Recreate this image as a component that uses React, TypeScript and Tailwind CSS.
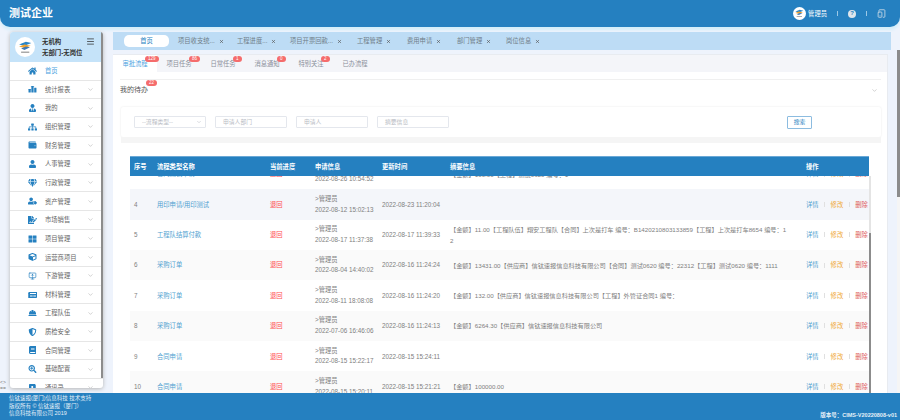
import { ChevronDown, Menu, MonitorUp, TabletSmartphone, X } from "lucide-react"
import {
  FaAddressBook,
  FaBook,
  FaCube,
  FaFileSignature,
  FaGem,
  FaHardHat,
  FaHome,
  FaNewspaper,
  FaSearchPlus,
  FaShieldAlt,
  FaSitemap,
  FaThLarge,
  FaUser,
  FaUserTag,
  FaUserTie,
  FaWallet,
} from "react-icons/fa"

function BarsIcon({ className }: { className?: string }) {
  return (
    <svg viewBox="0 0 16 16" className={className} fill="currentColor">
      <rect x="0" y="8" width="4.5" height="7" rx="0.5" />
      <rect x="5.7" y="2" width="4.5" height="13" rx="0.5" />
      <rect x="11.4" y="5.5" width="4.5" height="9.5" rx="0.5" />
    </svg>
  )
}

const menu = [
  { name: "首页", icon: FaHome, active: true },
  { name: "统计报表", icon: BarsIcon },
  { name: "我的", icon: FaUserTie },
  { name: "组织管理", icon: FaSitemap },
  { name: "财务管理", icon: FaWallet },
  { name: "人事管理", icon: FaUser },
  { name: "行政管理", icon: FaGem },
  { name: "资产管理", icon: FaUserTag },
  { name: "市场销售", icon: FaFileSignature },
  { name: "项目管理", icon: FaThLarge },
  { name: "运营商项目", icon: FaCube },
  { name: "下游管理", icon: MonitorUp },
  { name: "材料管理", icon: FaNewspaper },
  { name: "工程队伍", icon: FaHardHat },
  { name: "质检安全", icon: FaShieldAlt },
  { name: "合同管理", icon: FaBook },
  { name: "基础配置", icon: FaSearchPlus },
  { name: "通讯录", icon: FaAddressBook },
]

const openTabs = [
  { name: "项目收支统...", width: "w-[59px]" },
  { name: "工程进度...", width: "w-[53px]" },
  { name: "项目开票回款...", width: "w-[67px]" },
  { name: "工程管理", width: "w-[50px]" },
  { name: "费用申请", width: "w-[50px]" },
  { name: "部门管理", width: "w-[49px]" },
  { name: "岗位信息", width: "w-[50px]" },
]

const subTabs = [
  { name: "审批流程", badge: "129", active: true },
  { name: "项目任务", badge: "86" },
  { name: "日常任务", badge: "1" },
  { name: "消息通知", badge: "0" },
  { name: "特别关注", badge: "2" },
  { name: "已办流程" },
]

const rows = [
  { no: "3", type: "合同测试申请", apply: "2022-08-26 10:54:52", update: "", info: "【金额】100.00【工程】测试0620 编号：1", bg: "bg-white" },
  { no: "4", type: "用印申请/用印测试", apply: "2022-08-12 15:02:13", update: "2022-08-23 11:20:04", info: "", bg: "bg-[#f4f6fa]" },
  {
    no: "5",
    type: "工程队结算付款",
    apply: "2022-08-17 11:37:38",
    update: "2022-08-17 11:39:33",
    info: "【金额】11.00【工程队伍】翔安工程队【合同】上次是打车 编号：B1420210803133859【工程】上次是打车8654 编号：12",
    bg: "bg-white",
  },
  {
    no: "6",
    type: "采购订单",
    apply: "2022-08-04 14:40:02",
    update: "2022-08-16 11:24:24",
    info: "【金额】13431.00【供应商】信钛速报信息科技有限公司【合同】测试0620 编号：22312【工程】测试0620 编号：1111",
    bg: "bg-[#fafafa]",
  },
  {
    no: "7",
    type: "采购订单",
    apply: "2022-08-11 18:08:08",
    update: "2022-08-16 11:24:20",
    info: "【金额】132.00【供应商】信钛速报信息科技有限公司【工程】外管证合同1 编号：",
    bg: "bg-white",
  },
  { no: "8", type: "采购订单", apply: "2022-07-06 16:46:06", update: "2022-08-16 11:24:13", info: "【金额】6264.30【供应商】信钛速报信息科技有限公司", bg: "bg-[#fafafa]" },
  { no: "9", type: "合同申请", apply: "2022-08-15 15:22:17", update: "2022-08-15 15:24:11", info: "", bg: "bg-white" },
  { no: "10", type: "合同申请", apply: "2022-08-15 15:20:11", update: "2022-08-15 15:21:21", info: "【金额】100000.00", bg: "bg-[#fafafa]" },
]

function Logo({ size }: { size: string }) {
  return (
    <div className={`${size} flex shrink-0 items-center justify-center rounded-full bg-white`}>
      <svg viewBox="0 0 24 24" className="h-[82%] w-[82%]">
        <path d="M3 8 L13 4 L21 6 L11 10 Z" fill="#2a86c8" />
        <path d="M3 11 L11 8 L20 10 L11 13 Z" fill="#f0a22e" />
        <path d="M6 14 L13 11 L19 12 L11 16 Z" fill="#3f79b5" />
        <rect x="6" y="18.5" width="12" height="1.6" fill="#8a8a8a" />
      </svg>
    </div>
  )
}

function Badge({ text, className }: { text: string; className: string }) {
  return (
    <span className={`absolute flex h-[6px] items-center justify-center rounded-full bg-[#f56c6c] px-[3px] text-[4.5px] leading-none text-white ${className}`}>
      {text}
    </span>
  )
}

export default function App() {
  return (
    <div className="relative flex h-[420px] w-[900px] flex-col overflow-hidden bg-[#eef3fc] font-['Liberation_Sans','Noto_Sans_CJK_SC',sans-serif] text-[#606266]">
      <header className="flex h-[27px] shrink-0 items-center justify-between rounded-b-[10px] bg-[#2580c0] pl-[9px] pr-[14px] shadow-[0_3px_3px_#d3eefa]">
        <span className="text-[11px] font-bold text-white">测试企业</span>
        <div className="flex items-center text-white">
          <Logo size="h-[13px] w-[13px]" />
          <span className="ml-[2px] text-[6.3px]">管理员</span>
          <span className="ml-[10px] h-[5px] w-px bg-[#9cc8e6]" />
          <span className="ml-[10px] flex h-[8px] w-[8px] items-center justify-center rounded-full bg-[#dfe6ec] text-[6px] font-bold text-[#2580c0]">?</span>
          <span className="ml-[10px] h-[5px] w-px bg-[#9cc8e6]" />
          <TabletSmartphone className="ml-[10px] h-[9px] w-[9px] text-[#dfe6ec]" />
        </div>
      </header>

      <div className="flex min-h-0 flex-1 pt-[5px]">
        <aside className="relative ml-[10px] flex h-[356px] w-[93px] shrink-0 flex-col overflow-hidden rounded-[3px] bg-white shadow-[0_1px_4px_#b5b5b5]">
          <div className="flex h-[30px] shrink-0 items-center bg-[#c5e3f9] pl-[5px] pr-[8px]">
            <Logo size="h-[20px] w-[20px]" />
            <div className="ml-[7px] flex-1 text-[6.4px] leading-[11px] text-[#333]">
              <div className="flex items-center justify-between font-bold">
                无机构
                <Menu className="h-[9px] w-[9px]" />
              </div>
              <div className="font-bold">无部门-无岗位</div>
            </div>
          </div>
          <div className="min-h-0 flex-1 overflow-hidden">
            {menu.map((item) => (
              <div key={item.name} className="flex h-[18.65px] items-center border-b border-[#e6e6e6] pl-[18px] pr-[9px]">
                <item.icon className="h-[8px] w-[9px] shrink-0 text-[#2580c0]" />
                <span className={`ml-[8px] flex-1 text-[6.3px] ${item.active ? "text-[#4a9fe0]" : "text-[#666]"}`}>{item.name}</span>
                {!item.active && <ChevronDown className="h-[7px] w-[7px] text-[#b5b5b5]" />}
              </div>
            ))}
          </div>
          <div className="absolute right-0 top-0 h-[346px] w-[2px] bg-[#8c8c8c]" />
        </aside>

        <main className="ml-[10px] flex min-w-0 flex-1 flex-col">
          <div className="flex h-[18px] w-[778px] shrink-0 items-center bg-[#bddcf5] pl-[11px]">
            <div className="flex h-[12px] w-[45px] items-center justify-center rounded-[5px] bg-white text-[6.3px] text-[#2580c0]">首页</div>
            <div className="ml-[9px] flex items-center text-[6.3px] text-[#6f7c88]">
              {openTabs.map((t) => (
                <span key={t.name} className={`flex items-center gap-[4px] whitespace-nowrap ${t.width}`}>
                  {t.name}
                  <X className="h-[5px] w-[5px] text-[#555]" strokeWidth={3} />
                </span>
              ))}
            </div>
          </div>

          <div className="flex min-h-0 flex-1">
            <section className="mt-[4px] flex w-[775px] min-w-0 flex-col border-r border-[#e8ebf0] bg-white">
              <div className="flex h-[18px] shrink-0 border-t border-[#e8ebf0] bg-[#f4f5f9]">
                {subTabs.map((t) => (
                  <div
                    key={t.name}
                    className={`relative flex h-[18px] w-[44px] items-center justify-center text-[6.3px] ${t.active ? "bg-white text-[#4a9fe0]" : "text-[#8a8f99]"}`}
                  >
                    {t.name}
                    {t.badge && <Badge text={t.badge} className="left-[32px] top-[1px]" />}
                  </div>
                ))}
              </div>

              <div className="ml-[7px] mr-[6px] mt-[7px] flex h-[27px] shrink-0 items-center justify-between border-t border-[#f0f0f0] pb-[5px]">
                <span className="relative text-[7px] text-[#555]">
                  我的待办
                  <Badge text="22" className="left-[26px] top-[-5px]" />
                </span>
                <ChevronDown className="mr-[3px] h-[7px] w-[7px] text-[#b5b5b5]" />
              </div>

              <div className="ml-[8px] mr-[6px] mt-[1px] flex h-[30px] shrink-0 items-center rounded-[2px] pl-[13px] pr-[69px] shadow-[0_0_2px_#e4e4e4]">
                <div className="flex h-[12px] w-[72px] items-center justify-between rounded-[1px] border border-[#e4e7ed] pl-[7px] pr-[3px] text-[5.8px] text-[#b9bcc4]">
                  --流程类型--
                  <ChevronDown className="h-[6px] w-[6px]" />
                </div>
                {["申请人部门", "申请人", "摘要信息"].map((p) => (
                  <div key={p} className="ml-[9px] flex h-[12px] w-[72px] items-center rounded-[1px] border border-[#e4e7ed] pl-[7px] text-[5.8px] text-[#b9bcc4]">
                    {p}
                  </div>
                ))}
                <div className="ml-auto flex h-[13px] w-[25px] items-center justify-center rounded-[1px] border border-[#8cbce0] text-[5.8px] text-[#2580c0]">搜索</div>
              </div>

              <div className="ml-[8px] mr-[6px] h-[6px] shrink-0 bg-[#f5f5f5]" />

              <div className="flex min-h-0 flex-1 flex-col pb-0 pl-[17px] pr-[18px] pt-[13px]">
                <div className="relative flex min-h-0 flex-1 flex-col">
                  <div className="z-10 flex h-[20px] shrink-0 items-center border-t border-[#6aa8d6] bg-[#2580c0] text-[6.3px] font-bold text-white">
                    <span className="w-[27px] pl-[4px]">序号</span>
                    <span className="w-[113px]">流程类型名称</span>
                    <span className="w-[45px]">当前进度</span>
                    <span className="w-[67px]">申请信息</span>
                    <span className="w-[68px]">更新时间</span>
                    <span className="w-[356px]">摘要信息</span>
                    <span>操作</span>
                  </div>
                  <div className="min-h-0 flex-1 overflow-hidden">
                    <div className="mt-[-17px]">
                      {rows.map((r) => (
                        <div key={r.no} className={`flex h-[30.35px] items-center text-[6.3px] text-[#808080] ${r.bg}`}>
                          <span className="w-[27px] pl-[4px]">{r.no}</span>
                          <span className="w-[113px] text-[#4f9fd0]">{r.type}</span>
                          <span className="w-[45px] text-[#ff4d4f]">退回</span>
                          <div className="w-[67px] leading-[10.5px]">
                            <div>&gt;管理员</div>
                            <div className="whitespace-nowrap">{r.apply}</div>
                          </div>
                          <span className="w-[68px] whitespace-nowrap">{r.update}</span>
                          <span className="w-[356px] pr-[17px] text-[6.2px] leading-[11px] [word-break:break-all]">{r.info}</span>
                          <span className="flex items-center whitespace-nowrap">
                            <span className="text-[#4f9fd0]">详情</span>
                            <span className="mx-[5.5px] h-[5px] w-px bg-[#e0e0e0]" />
                            <span className="text-[#f0a838]">修改</span>
                            <span className="mx-[5.5px] h-[5px] w-px bg-[#e0e0e0]" />
                            <span className="text-[#e0605e]">删除</span>
                          </span>
                        </div>
                      ))}
                    </div>
                  </div>
                  <div className="absolute bottom-0 left-full top-[20px] w-[2px] overflow-hidden bg-[#e4e4e4]">
                    <div className="mt-[57px] h-full bg-[#8c8c8c]" />
                  </div>
                </div>
              </div>
            </section>
            <div className="ml-[9px] w-[3px] shrink-0 bg-[#f5f5f5]">
              <div className="h-[147px] bg-[#8c8c8c]" />
            </div>
          </div>
        </main>
      </div>

      <footer className="flex h-[27px] shrink-0 justify-between bg-[#2580c0] pb-[1px] pl-[9px] pr-[3px] text-[5.5px] text-[#e6f0f8]">
        <div className="mt-[2px] leading-[7.5px]">
          <div>信钛速报(厦门)信息科技 技术支持</div>
          <div>版权所有 © 信钛速报（厦门）</div>
          <div>信息科技有限公司 2019</div>
        </div>
        <span className="self-end font-bold leading-[7.5px]">版本号：CIMS-V20220808-v01</span>
      </footer>

      <div className="absolute left-0 top-[379px] text-[5px] leading-[6px] text-[#777]">
        <div>&lt;&gt;</div>
        <div>==</div>
      </div>
    </div>
  )
}
